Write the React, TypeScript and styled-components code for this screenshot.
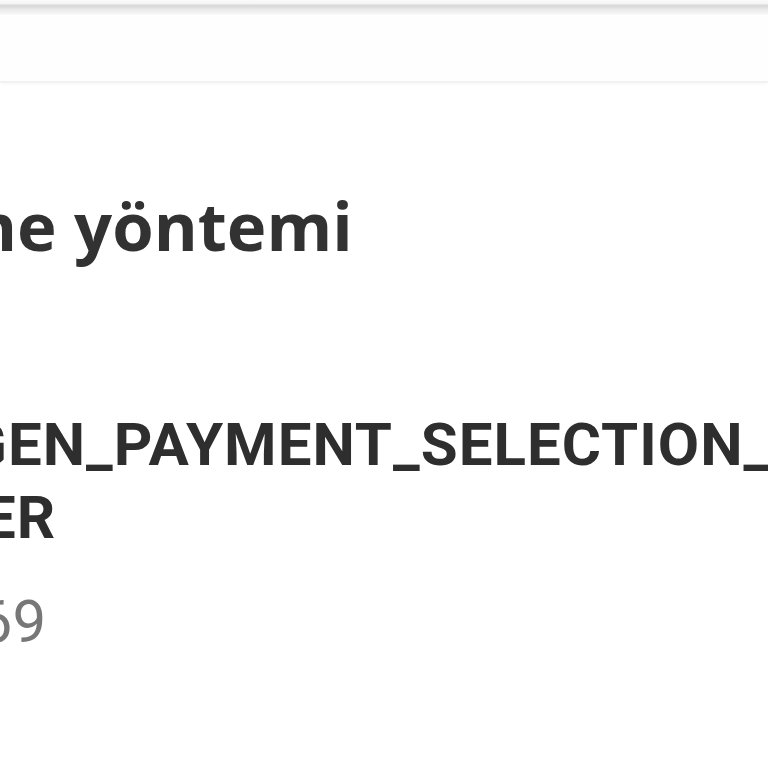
import React from 'react'
import styled, { createGlobalStyle } from 'styled-components'

const GlobalStyle = createGlobalStyle`
    html, body {
        margin: 0;
        padding: 0;
        background: #ffffff;
        overflow: hidden;
    }
    body {
        width: 768px;
        height: 768px;
    }
`

const Screen = styled.div`
    width: 768px;
    height: 768px;
    overflow: hidden;
    background: #ffffff;
    display: flex;
    flex-direction: column;
`

const StatusShade = styled.div`
    height: 15px;
    flex-shrink: 0;
    background: linear-gradient(
        to bottom,
        #fbfbfb 0px,
        #f4f4f4 4px,
        #d9d9d9 5px,
        #dcdcdc 7px,
        #e9e9e9 9px,
        #f3f3f3 13px,
        #fafafa 15px
    );
`

const Toolbar = styled.header`
    height: 66px;
    flex-shrink: 0;
    background: #fefefe;
    border-bottom: 2px solid #f2f2f2;
    box-shadow: 0 4px 2px -2px #fafafa;
`

const Body = styled.main`
    display: flex;
    flex-direction: column;
    white-space: nowrap;
`

const Title = styled.h1`
    margin: 102px 0 0 -184px;
    font-family: "Open Sans", "Noto Sans", sans-serif;
    font-weight: 700;
    font-size: 67px;
    line-height: 80px;
    color: #323232;
`

const Label = styled.div`
    margin-top: 143px;
    display: flex;
    flex-direction: column;
    font-family: Roboto, "Liberation Sans", sans-serif;
    font-weight: 700;
    font-size: 60px;
    line-height: 73px;
    letter-spacing: 1px;
    color: #2e2e2e;
`

const LabelLine = styled.span<{ $shift: number }>`
    display: block;
    margin-left: ${({ $shift }) => $shift}px;
`

const Price = styled.div`
    margin: 31px 0 0 -55px;
    font-family: Roboto, "Liberation Sans", sans-serif;
    font-weight: 400;
    font-size: 60px;
    line-height: 73px;
    color: #777777;
`

const App: React.FC = () => (
    <Screen>
        <GlobalStyle />
        <StatusShade />
        <Toolbar />
        <Body>
            <Title>Ödeme yöntemi</Title>
            <Label>
                <LabelLine $shift={-34}>GEN_PAYMENT_SELECTION_HEAD</LabelLine>
                <LabelLine $shift={-18}>ER</LabelLine>
            </Label>
            <Price>269</Price>
        </Body>
    </Screen>
)

export default App
